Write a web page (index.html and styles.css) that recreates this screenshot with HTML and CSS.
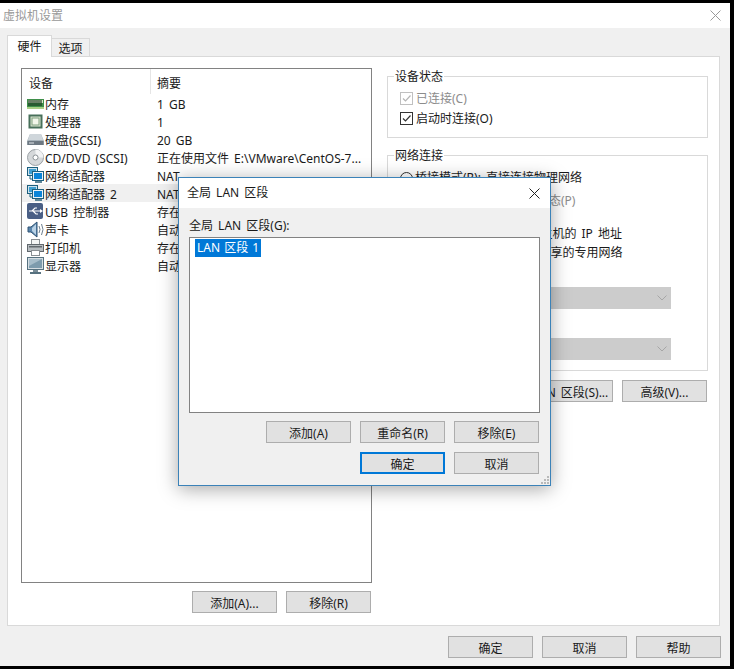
FILE: index.html
```html
<!DOCTYPE html>
<html lang="zh-CN">
<head>
<meta charset="utf-8">
<title>虚拟机设置</title>
<link rel="stylesheet" href="styles.css">
</head>
<body>
<svg class="defs" width="0" height="0" aria-hidden="true">
  <defs>
    <symbol id="net" viewBox="0 0 17 17">
      <rect x="0.5" y="0.5" width="10" height="8" fill="#cfe3ee" stroke="#1d5f7d"/>
      <rect x="2" y="2" width="7" height="5" fill="#3f9fd0"/>
      <path d="M3 9v3h3" fill="none" stroke="#1d5f7d"/>
      <rect x="5.5" y="4.5" width="11" height="9" fill="#e8f2f8" stroke="#1d5f7d"/>
      <rect x="7" y="6" width="8" height="6" fill="#0a84d8"/>
      <rect x="8" y="14" width="7" height="2" fill="#5f8698"/>
    </symbol>
  </defs>
</svg>
<div class="window">
  <div class="titlebar">
    <span class="title-text">虚拟机设置</span>
    <svg class="close close-dim" width="11" height="11" viewBox="0 0 11 11"><path d="M0.5 0.5l10 10M10.5 0.5l-10 10" stroke="#9a9a9a" fill="none"/></svg>
  </div>
  <div class="tabs">
    <div class="tab tab-active">硬件</div>
    <div class="tab">选项</div>
  </div>
  <div class="panel">
    <div class="left">
      <div class="list">
        <div class="list-head">
          <div class="col-a">设备</div>
          <div class="col-b">摘要</div>
        </div>
        <div class="row">
          <div class="col-a">
            <svg class="ico" viewBox="0 0 17 17"><rect x="0" y="4" width="17" height="8" fill="#3f8f4a"/><rect x="1" y="5" width="15" height="3" fill="#d9e8c8"/><path d="M2 5v6M4 5v6M6 5v6M8 5v6M10 5v6M12 5v6M14 5v6" stroke="#1c3a22" stroke-width="1.200"/><rect x="0" y="12" width="17" height="2" fill="#a9cf86"/></svg>
            <span>内存</span>
          </div>
          <div class="col-b"><span>1 GB</span></div>
        </div>
        <div class="row">
          <div class="col-a">
            <svg class="ico" viewBox="0 0 17 17"><rect x="2.5" y="2.5" width="12" height="12" fill="#dfe9d5" stroke="#48705a" stroke-width="2"/><rect x="5" y="5" width="7" height="7" fill="#f2f6ea" stroke="#7fa07f"/></svg>
            <span>处理器</span>
          </div>
          <div class="col-b"><span>1</span></div>
        </div>
        <div class="row">
          <div class="col-a">
            <svg class="ico" viewBox="0 0 17 17"><path d="M3 3h11l3 7v4H0v-4z" fill="#a9b4bc"/><path d="M3 3h11l2 6H1z" fill="#cfd6db"/><rect x="0.500" y="10" width="16" height="4" fill="#6d7882"/><rect x="2" y="11.500" width="5" height="1" fill="#dfe4e8"/></svg>
            <span>硬盘(SCSI)</span>
          </div>
          <div class="col-b"><span>20 GB</span></div>
        </div>
        <div class="row">
          <div class="col-a">
            <svg class="ico" viewBox="0 0 17 17"><circle cx="8.500" cy="8.500" r="8" fill="#d5d8da" stroke="#9aa0a4"/><path d="M8.500 0.500a8 8 0 0 1 8 8h-5a3 3 0 0 0-3-3z" fill="#f2f3f4"/><circle cx="8.500" cy="8.500" r="2.500" fill="#fff" stroke="#8d9498"/></svg>
            <span>CD/DVD (SCSI)</span>
          </div>
          <div class="col-b"><span>正在使用文件 E:\VMware\CentOS-7...</span></div>
        </div>
        <div class="row">
          <div class="col-a">
            <svg class="ico"><use href="#net"/></svg>
            <span>网络适配器</span>
          </div>
          <div class="col-b"><span>NAT</span></div>
        </div>
        <div class="row row-selected">
          <div class="col-a">
            <svg class="ico"><use href="#net"/></svg>
            <span>网络适配器 2</span>
          </div>
          <div class="col-b"><span>NAT</span></div>
        </div>
        <div class="row">
          <div class="col-a">
            <svg class="ico" viewBox="0 0 17 17"><rect x="0" y="0" width="16" height="16" rx="2" fill="#4a5f85"/><path d="M2 8h11M5 8l3-3h2M6 8l3 3h2" fill="none" stroke="#fff" stroke-width="1.200"/><path d="M13 6l3 2-3 2z" fill="#fff"/></svg>
            <span>USB 控制器</span>
          </div>
          <div class="col-b"><span>存在</span></div>
        </div>
        <div class="row">
          <div class="col-a">
            <svg class="ico" viewBox="0 0 17 17"><path d="M1 6h3l6-5v15l-6-5H1z" fill="#5b86ad" stroke="#2f5374"/><path d="M5 7l4-4v11l-4-4z" fill="#b9d2e6"/><path d="M12 5q2 3.500 0 7M14.500 3q3 5.500 0 11" fill="none" stroke="#6d7f8f"/></svg>
            <span>声卡</span>
          </div>
          <div class="col-b"><span>自动检测</span></div>
        </div>
        <div class="row">
          <div class="col-a">
            <svg class="ico" viewBox="0 0 17 17"><rect x="4.500" y="0.500" width="8" height="5" fill="#f5f5f5" stroke="#8a8f93"/><rect x="0.500" y="5.500" width="16" height="7" fill="#b8bdc1" stroke="#62686d"/><rect x="2" y="7" width="13" height="1.500" fill="#62686d"/><rect x="4.500" y="11.500" width="8" height="5" fill="#fff" stroke="#8a8f93"/></svg>
            <span>打印机</span>
          </div>
          <div class="col-b"><span>存在</span></div>
        </div>
        <div class="row">
          <div class="col-a">
            <svg class="ico" viewBox="0 0 17 17"><rect x="0.500" y="0.500" width="16" height="12" fill="#d5dde2" stroke="#56717f"/><rect x="2" y="2" width="13" height="9" fill="#7d9bad"/><path d="M2 2h13L2 9z" fill="#a7bdca"/><rect x="6" y="13" width="5" height="2" fill="#7a8d98"/><rect x="3" y="15" width="11" height="2" fill="#56717f"/></svg>
            <span>显示器</span>
          </div>
          <div class="col-b"><span>自动检测</span></div>
        </div>
      </div>
      <div class="btn-row left-actions">
        <button class="btn" type="button">添加(A)...</button>
        <button class="btn" type="button">移除(R)</button>
      </div>
    </div>
    <div class="right">
      <fieldset class="group group-status">
        <legend>设备状态</legend>
        <div class="opt opt-dim"><span class="check check-dim"><svg width="11" height="11" viewBox="0 0 11 11"><path d="M2 5.500l2.500 2.500 5-5.500" fill="none" stroke="#b5b5b5" stroke-width="1.200"/></svg></span>已连接(C)</div>
        <div class="opt opt-second"><span class="check"><svg width="11" height="11" viewBox="0 0 11 11"><path d="M2 5.500l2.500 2.500 5-5.500" fill="none" stroke="#333" stroke-width="1.200"/></svg></span>启动时连接(O)</div>
      </fieldset>
      <fieldset class="group group-net">
        <legend>网络连接</legend>
        <div class="opt opt-net"><span class="radio"></span>桥接模式(R): 直接连接物理网络</div>
        <div class="opt opt-net opt-dim opt-sub"><span class="check check-dim"></span>复制物理网络连接状态(P)</div>
        <div class="opt opt-net opt-nat"><span class="radio"></span>NAT 模式(N): 用于共享主机的 IP 地址</div>
        <div class="opt opt-net opt-host"><span class="radio"></span>仅主机模式(H): 与主机共享的专用网络</div>
        <div class="opt opt-net opt-custom"><span class="radio"></span>自定义(U): 特定虚拟网络</div>
        <div class="select"><svg width="10" height="6" viewBox="0 0 10 6"><path d="M0.500 0.500l4.500 4.500 4.500-4.500" fill="none" stroke="#a6a6a6"/></svg></div>
        <div class="sub-label">LAN 区段(L):</div>
        <div class="select"><svg width="10" height="6" viewBox="0 0 10 6"><path d="M0.500 0.500l4.500 4.500 4.500-4.500" fill="none" stroke="#a6a6a6"/></svg></div>
      </fieldset>
      <div class="btn-row right-actions">
        <button class="btn" type="button">LAN 区段(S)...</button>
        <button class="btn" type="button">高级(V)...</button>
      </div>
    </div>
  </div>
  <div class="btn-row footer">
    <button class="btn" type="button">确定</button>
    <button class="btn" type="button">取消</button>
    <button class="btn" type="button">帮助</button>
  </div>
</div>

<div class="dialog">
  <div class="dialog-title">
    <span>全局 LAN 区段</span>
    <svg class="close" width="11" height="11" viewBox="0 0 11 11"><path d="M0.500 0.500l10 10M10.500 0.500l-10 10" stroke="#222" fill="none"/></svg>
  </div>
  <div class="dialog-body">
    <div class="dialog-label">全局 LAN 区段(G):</div>
    <div class="listbox"><span class="listbox-item">LAN 区段 1</span></div>
    <div class="btn-row dialog-actions">
      <button class="btn" type="button">添加(A)</button>
      <button class="btn" type="button">重命名(R)</button>
      <button class="btn" type="button">移除(E)</button>
    </div>
    <div class="btn-row dialog-actions dialog-confirm">
      <button class="btn btn-default" type="button">确定</button>
      <button class="btn" type="button">取消</button>
    </div>
  </div>
  <svg class="grip" width="9" height="9" viewBox="0 0 9 9"><path d="M7 1h2v2H7zM4 4h2v2H4zM7 4h2v2H7zM1 7h2v2H1zM4 7h2v2H4zM7 7h2v2H7z" fill="#b9b9b9"/></svg>
</div>
</body>
</html>
```
FILE: styles.css
```css
* { box-sizing: border-box; }
html, body { margin: 0; padding: 0; }
body {
  width: 734px;
  height: 669px;
  overflow: hidden;
  background: #000;
  font-family: "Noto Sans", "Noto Sans CJK SC", sans-serif;
  font-size: 12px;
  line-height: 16px;
  word-spacing: 2px;
  color: #1a1a1a;
  position: relative;
}
.defs { position: absolute; }
.window {
  margin: 3px 4px 3px 0;
  height: 663px;
  background: #f0f0f0;
  display: flex;
  flex-direction: column;
}
.titlebar {
  height: 25px;
  flex: none;
  background: #fff;
  display: flex;
  align-items: center;
  justify-content: space-between;
  padding: 0 4px 0 3px;
}
.title-text { color: #999; }
.tabs {
  height: 28px;
  flex: none;
  display: flex;
  align-items: flex-end;
  padding-left: 7px;
  position: relative;
  z-index: 1;
}
.tab {
  width: 38px;
  height: 18px;
  border: 1px solid #d9d9d9;
  border-bottom: 0;
  border-left: 0;
  text-align: center;
  line-height: 19px;
}
.tab-active {
  width: 45px;
  height: 22px;
  margin-bottom: -1px;
  background: #fff;
  border-left: 1px solid #d9d9d9;
  line-height: 22px;
}
.panel {
  height: 570px;
  flex: none;
  margin: 0 10px 0 7px;
  border: 1px solid #d9d9d9;
  background: #fff;
  padding: 11px 0 0 13px;
  display: flex;
  gap: 15px;
}
.left { width: 351px; flex: none; }
.list {
  height: 515px;
  border: 1px solid #828282;
  background: #fff;
}
.list-head {
  height: 25px;
  display: flex;
  align-items: center;
}
.list-head .col-a {
  padding-left: 7px;
  height: 100%;
  align-items: flex-start;
  line-height: 29px;
  border-right: 1px solid #e5e5e5;
}
.list-head .col-b { line-height: 29px; height: 100%; align-items: flex-start; }
.row {
  height: 18px;
  display: flex;
  align-items: center;
  white-space: nowrap;
}
.row span { padding-top: 3px; }
.row-selected { background: #f0f0f0; }
.col-a {
  width: 129px;
  flex: none;
  display: flex;
  align-items: center;
  gap: 1px;
  padding-left: 5px;
}
.col-b { padding-left: 6px; display: flex; align-items: center; }
.ico { width: 17px; height: 17px; flex: none; }
.btn-row { display: flex; justify-content: flex-end; gap: 9px; }
.btn {
  width: 85px;
  height: 22px;
  padding: 4px 0 0;
  margin: 0;
  border: 1px solid #adadad;
  border-radius: 0;
  background: #e1e1e1;
  color: #1a1a1a;
  font: inherit;
  line-height: 16px;
  word-spacing: inherit;
  text-align: center;
  white-space: nowrap;
}
.left-actions { margin-top: 8px; padding-right: 1px; }
.right { width: 321px; flex: none; }
.group {
  margin: 0;
  border: 1px solid #d9d9d9;
  padding: 0 0 0 12px;
  min-width: 0;
}
.group legend { margin-left: -6px; padding: 0 1px; height: 16px; line-height: 18px; }
.group-status { height: 70px; padding-top: 5px; }
.group-net { height: 224px; margin-top: 9px; padding-top: 5px; }
.opt {
  height: 19px;
  display: flex;
  align-items: center;
  white-space: nowrap;
}
.opt-second { margin-top: 1px; }
.opt-dim { color: #8c8c8c; }
.check {
  width: 13px;
  height: 13px;
  flex: none;
  margin-right: 3px;
  border: 1px solid #333;
  display: flex;
  align-items: center;
  justify-content: center;
  background: #fff;
}
.check-dim { border-color: #c0c0c0; }
.radio {
  width: 13px;
  height: 13px;
  flex: none;
  margin-right: 2px;
  border: 1px solid #333;
  border-radius: 50%;
  background: #fff;
}
.opt-net { height: 20px; }
.opt-sub { margin-top: 3px; padding-left: 22px; }
.opt-sub .check { margin-right: 6px; }
.opt-nat { margin-top: 13px; }
.opt-host { margin-top: -1px; }
.opt-nat .radio { margin-right: 3px; }
.opt-host .radio { margin-right: 5px; }
.opt-custom { margin-top: 2px; }
.select {
  width: 256px;
  height: 22px;
  margin: 2px 0 0 15px;
  background: #ccc;
  display: flex;
  align-items: center;
  justify-content: flex-end;
  padding-right: 4px;
}
.sub-label { height: 18px; margin: 11px 0 0 15px; color: #8c8c8c; line-height: 18px; }
.sub-label + .select { margin-top: 0; }
.right-actions { margin-top: 9px; padding-right: 1px; }
.footer { margin-top: 10px; padding-right: 9px; flex: none; }
.close { flex: none; }
.close-dim { margin-right: 5px; }

.dialog {
  position: absolute;
  left: 178px;
  top: 177px;
  width: 373px;
  height: 309px;
  border: 1px solid #3b82b8;
  background: #f0f0f0;
  box-shadow: 0 3px 18px rgba(0, 0, 0, 0.35);
  display: flex;
  flex-direction: column;
}
.dialog-title {
  height: 30px;
  flex: none;
  background: #fff;
  display: flex;
  align-items: center;
  justify-content: space-between;
  padding: 0 10px 0 8px;
}
.dialog-body { flex: 1; padding: 9px 10px 0 10px; }
.dialog-label { line-height: 18px; height: 20px; }
.listbox {
  height: 176px;
  border: 1px solid #828282;
  background: #fff;
  padding: 1px 0 0 5px;
}
.listbox-item {
  display: inline-block;
  height: 18px;
  line-height: 18px;
  padding: 0 2px;
  word-spacing: 1px;
  background: #0078d7;
  color: #fff;
}
.dialog-actions { margin-top: 8px; padding-right: 1px; }
.dialog-confirm { margin-top: 9px; }
.btn-default { border: 2px solid #0078d7; padding-top: 3px; }
.grip { position: absolute; right: 1px; bottom: 1px; }
```
